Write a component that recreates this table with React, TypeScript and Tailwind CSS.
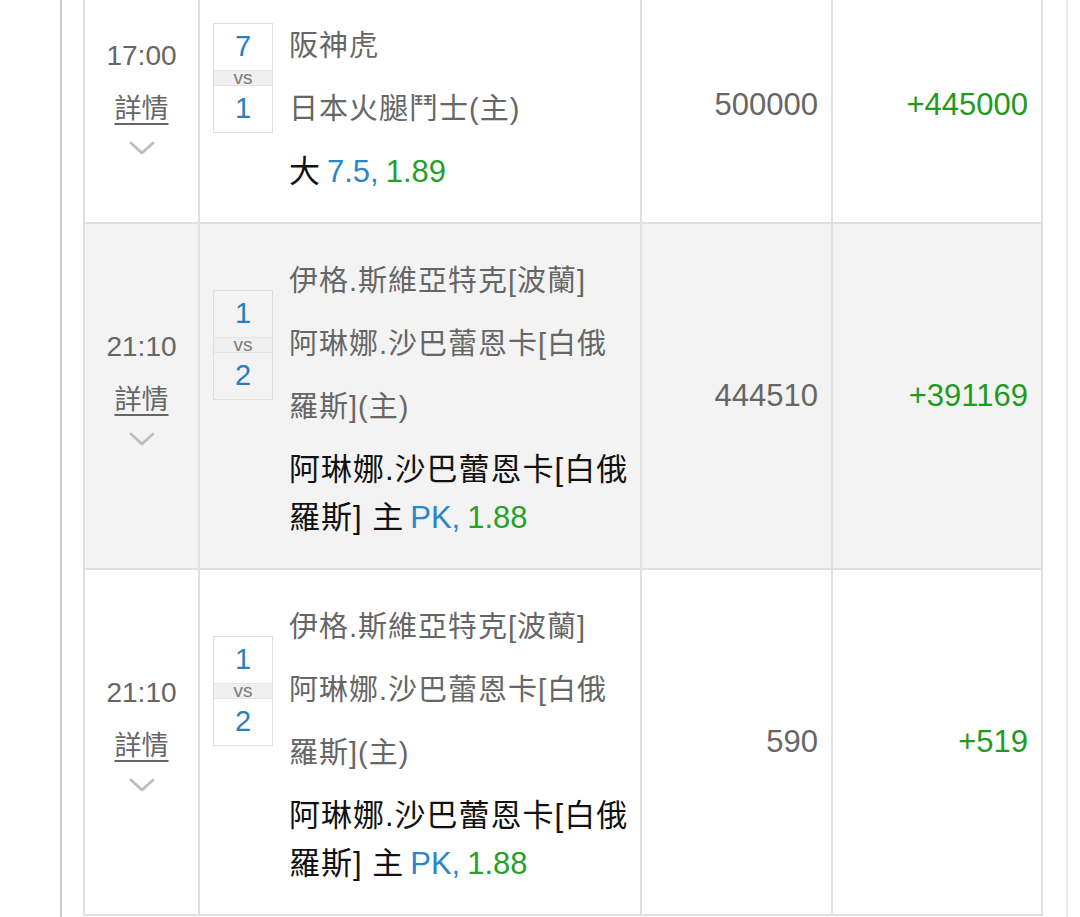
const font = { fontFamily: '"Liberation Sans", "Noto Sans CJK TC", sans-serif' }

type Bet = {
  time: string
  home: number
  away: number
  teams: string[]
  pick: string[]
  line: string
  odds: string
  stake: string
  win: string
  shaded?: boolean
}

const bets: Bet[] = [
  {
    time: '17:00',
    home: 7,
    away: 1,
    teams: ['阪神虎', '日本火腿鬥士(主)'],
    pick: ['大'],
    line: '7.5,',
    odds: '1.89',
    stake: '500000',
    win: '+445000',
  },
  {
    time: '21:10',
    home: 1,
    away: 2,
    teams: ['伊格.斯維亞特克[波蘭]', '阿琳娜.沙巴蕾恩卡[白俄', '羅斯](主)'],
    pick: ['阿琳娜.沙巴蕾恩卡[白俄', '羅斯] 主'],
    line: 'PK,',
    odds: '1.88',
    stake: '444510',
    win: '+391169',
    shaded: true,
  },
  {
    time: '21:10',
    home: 1,
    away: 2,
    teams: ['伊格.斯維亞特克[波蘭]', '阿琳娜.沙巴蕾恩卡[白俄', '羅斯](主)'],
    pick: ['阿琳娜.沙巴蕾恩卡[白俄', '羅斯] 主'],
    line: 'PK,',
    odds: '1.88',
    stake: '590',
    win: '+519',
  },
]

const Chevron = () => (
  <svg width="26" height="14" viewBox="0 0 26 14" fill="none">
    <path d="M2 2 L13 12 L24 2" stroke="#bdbdbd" strokeWidth="2.8" strokeLinecap="round" strokeLinejoin="round" />
  </svg>
)

const ScoreBox = ({ home, away }: { home: number; away: number }) => (
  <div className="w-[60px] shrink-0 border border-[#dedede] flex flex-col">
    <div className="h-[46px] flex items-center justify-center text-[29px] text-[#2a7fc0]">{home}</div>
    <div className="h-[16px] flex items-center justify-center bg-[#efefef] border-y border-[#e4e4e4] text-[19px] leading-[14px] text-[#7a7a7a]">
      vs
    </div>
    <div className="h-[46px] flex items-center justify-center text-[29px] text-[#2a7fc0]">{away}</div>
  </div>
)

const BetRow = ({ bet }: { bet: Bet }) => (
  <div className={`flex border-b-2 border-[#e0e0e0] ${bet.shaded ? 'bg-[#f3f3f3]' : 'bg-white'}`}>
    <div className="w-[115px] shrink-0 border-r-2 border-[#e0e0e0] flex flex-col items-center justify-center pb-[20px]">
      <span className="text-[28px] leading-[40px] text-[#666]">{bet.time}</span>
      <span className="mt-[13px] text-[27px] leading-[40px] text-[#666] underline underline-offset-[5px] decoration-[1.5px]">
        詳情
      </span>
      <div className="mt-[12px]">
        <Chevron />
      </div>
    </div>

    <div className="w-[442px] shrink-0 border-r-2 border-[#e0e0e0] py-[26px]">
      <div className="flex items-center gap-[16px] pl-[13px]">
        <ScoreBox home={bet.home} away={bet.away} />
        <div className="flex flex-col">
          {bet.teams.map((t, i) => (
            <span key={i} className="text-[29px] tracking-[1px] leading-[63px] text-[#666] whitespace-nowrap">
              {t}
            </span>
          ))}
        </div>
      </div>
      <div className="mt-[7px] pl-[89px] flex flex-col text-[31px] leading-[48px] text-[#111] whitespace-nowrap">
        {bet.pick.map((p, i) => (
          <span key={i}>
            <span className="tracking-[1px]">{p}</span>
            {i === bet.pick.length - 1 && (
              <>
                <span className="text-[#2a86cc] ml-[6px]">{bet.line}</span>
                <span className="text-[#27a02a] ml-[7px]">{bet.odds}</span>
              </>
            )}
          </span>
        ))}
      </div>
    </div>

    <div className="w-[191px] shrink-0 border-r-2 border-[#e0e0e0] flex items-center justify-end pr-[13px] text-[31px] text-[#666]">
      {bet.stake}
    </div>

    <div className="w-[210px] shrink-0 border-r-2 border-[#e0e0e0] flex items-center justify-end pr-[13px] text-[31px] text-[#1f9a1f]">
      {bet.win}
    </div>
  </div>
)

export default function App() {
  return (
    <div className="w-[1080px] h-[917px] overflow-hidden bg-white pl-[60px]" style={font}>
      <div className="h-full flex border-l-2 border-[#cdcdcd] pl-[21px]">
        <div className="-mt-[11px] border-l-2 border-[#e0e0e0] self-start">
          {bets.map((b, i) => (
            <BetRow key={i} bet={b} />
          ))}
        </div>
        <div className="ml-[23px] h-full border-l-2 border-[#ececec]" />
      </div>
    </div>
  )
}
